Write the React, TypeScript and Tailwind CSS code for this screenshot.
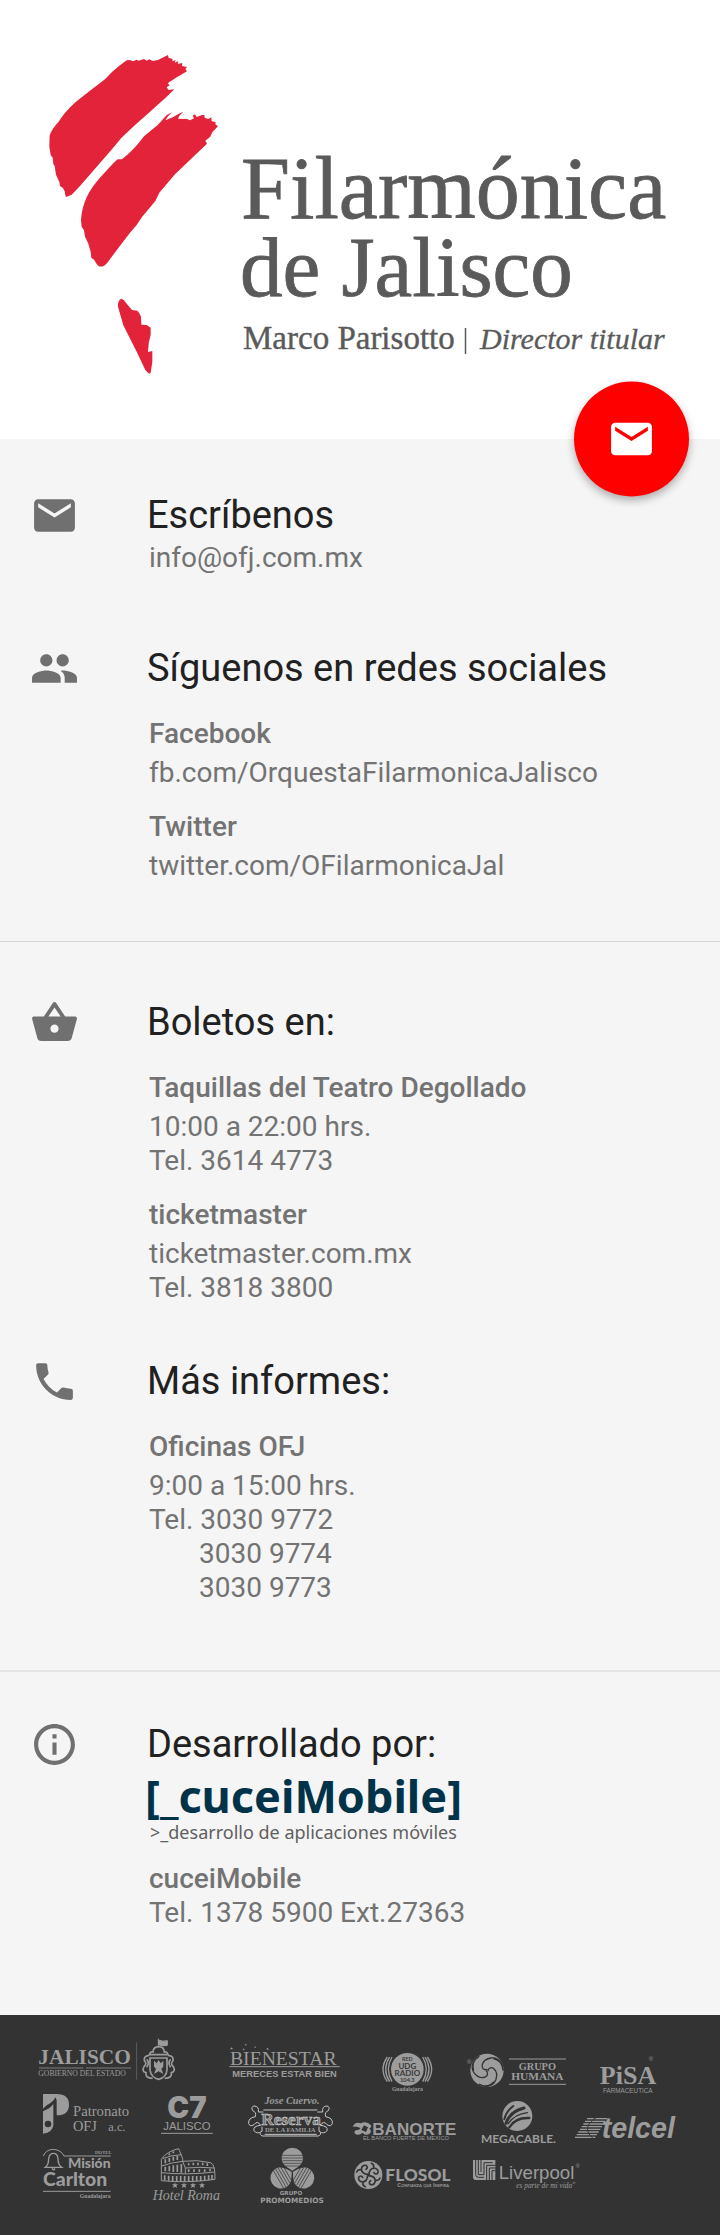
import type { ReactNode } from "react";
import { MdEmail, MdInfoOutline, MdPeople, MdPhone, MdShoppingBasket } from "react-icons/md";
import type { IconType } from "react-icons";

const SERIF = "'Liberation Serif', serif";
const SANS = "'Liberation Sans', sans-serif";
const LATO = "Lato, sans-serif";

function OrchestraLogo() {
  return (
    <svg viewBox="48 52 624 326" className="block h-auto w-full" role="img" aria-label="Filarmónica de Jalisco">
      <g transform="translate(30 40) scale(0.33333)" fill="#e32339">
        <path d="M108 471 Q104 463 105 456 L99 444 L90 438 L88 426 L78 404 L74 378 L70 372 L68 353 L62 345 L58 320 L59 286 Q66 266 86 245 Q104 215 138 185 Q180 152 225 118 Q246 94 267 78 L290 61 L300 60 L309 64 L320 59 L326 62 L342 57 L350 62 L358 58 L368 63 L384 60 L402 51 L414 45 L416 54 L427 56 L428 64 L437 60 L434 68 L445 63 L443 72 L457 69 L456 78 L471 81 L466 87 L471 94 L438 113 L413 130 L419 136 L410 142 L416 150 L433 148 L410 170 L350 224 Q310 258 273 295 Q246 329 210 369 L150 438 L125 464 Z" />
        <path d="M205 678 Q198 671 193 660 L184 653 L182 635 L174 608 L165 590 L162 571 L155 560 L153 540 Q155 505 170 472 Q184 440 220 402 L250 370 L263 358 L276 358 Q312 330 342 289 L383 255 L397 240 L410 225 L427 217 L414 229 L406 241 L430 231 L445 222 L460 215 L448 227 L444 236 L460 237 L469 236 L480 241 L492 235 L488 227 L495 223 L500 231 L516 225 L523 225 L524 233 L535 237 L544 232 L545 244 L557 246 L556 253 L564 259 L548 275 L540 291 L526 302 L531 311 L490 350 L435 403 L388 458 L376 483 L336 531 L320 555 L300 578 L265 624 L232 668 Q218 684 205 678 Z" />
        <path d="M264 800 Q263 779 275 776 Q283 779 289 790 L306 810 L322 812 Q329 818 333 830 L334 854 L350 855 L362 863 L362 884 Q354 910 354 936 L367 933 L367 965 L362 998 L357 1001 L346 990 L320 935 L280 856 Z" />
      </g>
      <g fill="#5a5a5a" stroke="#5a5a5a" strokeWidth="0.8" fontFamily={SERIF}>
        <text x="241" y="218" fontSize="88">Filarmónica</text>
        <text x="240" y="296" fontSize="85">de Jalisco</text>
        <text x="243" y="349" fontSize="33" strokeWidth="0.4">Marco Parisotto</text>
        <path d="M465.500 328V354" strokeWidth="1.500" />
        <text x="480" y="349" fontSize="30" fontStyle="italic" strokeWidth="0.3">Director titular</text>
      </g>
    </svg>
  );
}

function Section({ icon: Icon, title, children }: { icon: IconType; title: string; children: ReactNode }) {
  return (
    <section className="pl-[30px]">
      <div className="flex h-11 items-center gap-[68px]">
        <Icon className="size-[49px] shrink-0 text-[#707070]" />
        <h2 className="text-[38px] leading-[44px] text-[#212121]">{title}</h2>
      </div>
      <div className="pl-[119px]">{children}</div>
    </section>
  );
}

function Entry({ label, children }: { label: string; children: ReactNode }) {
  return (
    <div>
      <h3 className="mb-[5px] font-medium">{label}</h3>
      {children}
    </div>
  );
}

function Logo({ name, box, width, children }: { name: string; box: string; width: string; children: ReactNode }) {
  return (
    <svg viewBox={box} className={`${width} block h-full min-w-0 overflow-visible`} fill="#9c9c9c" role="img" aria-label={name}>
      {children}
    </svg>
  );
}

const stroke = { fill: "none", stroke: "#9c9c9c" };

function Sponsors() {
  return (
    <footer className="bg-[#333333] px-9 pt-[19px] pb-[29px]">
      <div className="flex h-[60px] justify-center">
        <Logo name="Jalisco" box="108 72 498 180" width="w-[166px]">
          <text x="115" y="161" fontSize="64" fontWeight="700" fontFamily={SERIF}>JALISCO</text>
          <path d="M117 174H250M258 174H393" {...stroke} strokeWidth="3" opacity="0.7" />
          <text x="115" y="199" fontSize="23" fontFamily={SERIF}>GOBIERNO DEL ESTADO</text>
          <path d="M410 97V209" {...stroke} strokeWidth="2" opacity="0.6" />
          <path d="M475 86V112M475 90Q488 96 502 92V106Q488 110 476 104Z" stroke="#9c9c9c" strokeWidth="3" />
          <path d="M459 126Q460 110 476 110Q492 110 493 126Q502 124 504 134H448Q450 124 459 126ZM450 144H501V180Q499 202 476 208Q453 202 450 180Z" {...stroke} strokeWidth="5" />
          <path d="M448 136Q428 138 434 154Q442 160 432 170Q424 184 438 188Q434 204 458 205M504 136Q524 138 518 154Q510 160 520 170Q528 184 514 188Q518 204 494 205M440 148Q450 158 440 172M512 148Q502 158 512 172" {...stroke} strokeWidth="5" />
          <path d="M462 152L470 160L476 150L482 160L490 152V170L484 176L490 192L476 184L462 192L468 176L462 170Z" />
        </Logo>
        <Logo name="Bienestar" box="606 72 474 180" width="w-[158px]">
          <text x="690" y="166" fontSize="59" fontFamily={SERIF}>BIENESTAR</text>
          <path d="M688 170H1019" {...stroke} strokeWidth="3" />
          <path d="M690 118l5-6 4 6zM734 106l3-5 4 5zM728 120l3-5 3 5zM762 112l4-3 2 5zM798 118l5-5 4 6z" />
          <text x="697" y="201" fontSize="28" fontWeight="700" fontFamily={SANS}>MERECES ESTAR BIEN</text>
        </Logo>
        <Logo name="Red UDG Radio" box="1080 72 270 180" width="w-[90px]">
          <circle cx="1222" cy="178" r="49" />
          <path d="M1176 141Q1154 178 1176 215M1169 141Q1145 178 1169 215M1162 141Q1136 178 1162 215M1268 141Q1290 178 1268 215M1275 141Q1299 178 1275 215M1282 141Q1308 178 1282 215" {...stroke} strokeWidth="4" />
          <g fill="#3a3a3a" textAnchor="middle" fontFamily={LATO} fontWeight="700">
            <text x="1222" y="153" fontSize="16">RED</text>
            <text x="1222" y="176" fontSize="24">UDG</text>
            <text x="1222" y="198" fontSize="24">RADIO</text>
            <text x="1222" y="217" fontSize="17">104.3</text>
          </g>
          <text x="1222" y="243" fontSize="17" textAnchor="middle" fontWeight="700" fontFamily={SERIF}>Guadalajara</text>
        </Logo>
        <Logo name="Grupo Humana" box="1350 72 402 180" width="w-[134px]">
          <text x="1401" y="163" fontSize="18" fontFamily={SANS}>®</text>
          <circle cx="1461" cy="181" r="50" />
          <g fill="none" stroke="#333333" strokeLinecap="round">
            {[0, 120, 240].map((angle) => (
              <g key={angle} transform={`rotate(${angle} 1461 181)`}>
                <path d="M1461 178C1440 184 1440 150 1472 144C1486 142 1496 148 1502 158" strokeWidth="4" />
                <path d="M1436 140C1420 150 1416 166 1420 180" strokeWidth="5" />
              </g>
            ))}
          </g>
          <path d="M1527 147H1698M1527 223H1698" {...stroke} strokeWidth="3" />
          <text x="1612" y="180" fontSize="31" textAnchor="middle" fontWeight="700" fontFamily={SERIF}>GRUPO</text>
          <text x="1612" y="211" fontSize="34" textAnchor="middle" fontWeight="700" fontFamily={SERIF}>HUMANA</text>
        </Logo>
        <Logo name="PiSA Farmacéutica" box="1752 72 300 180" width="w-[100px]">
          <text x="1884" y="223" fontSize="78" textAnchor="middle" fontWeight="700" fontFamily={SERIF}>PiSA</text>
          <text x="1946" y="152" fontSize="18" fontFamily={SANS}>®</text>
          <text x="1809" y="248" fontSize="19" fontFamily={SANS}>FARMACEUTICA</text>
        </Logo>
      </div>
      <div className="flex h-[52px] justify-center">
        <Logo name="Patronato OFJ" box="108 252 327 156" width="w-[109px]">
          <path d="M129 252H170Q207 252 207 284Q207 316 170 316V280Q172 270 166 262Q160 276 140 286L129 296Z" />
          <path d="M129 304Q150 296 160 282V345Q158 368 129 371Z" />
          <circle cx="144" cy="342" r="10" fill="#333333" />
          <g fontFamily={SERIF}>
            <text x="219" y="319" fontSize="44">Patronato</text>
            <text x="219" y="362" fontSize="43">OFJ</text>
            <text x="325" y="362" fontSize="37">a.c.</text>
          </g>
        </Logo>
        <Logo name="C7 Jalisco" box="435 252 255 156" width="w-[85px]">
          <text x="561" y="325" fontSize="88" textAnchor="middle" fontWeight="900" fontFamily="Inter, sans-serif">C7</text>
          <text x="490" y="360" fontSize="34" fontFamily={SANS}>JALISCO</text>
          <path d="M483 370H638" {...stroke} strokeWidth="3" />
        </Logo>
        <Logo name="José Cuervo Reserva de la Familia" box="690 252 339 156" width="w-[113px]">
          <text x="876" y="281" fontSize="31" textAnchor="middle" fontWeight="700" fontStyle="italic" fontFamily={SERIF}>Jose Cuervo.</text>
          <text x="873" y="344" fontSize="52" textAnchor="middle" fontWeight="700" fontFamily={SERIF} fill="#777777" stroke="#dddddd" strokeWidth="1.500">Reserva</text>
          <text x="871" y="367" fontSize="20" textAnchor="middle" fontWeight="700" fontFamily={SERIF}>DE LA FAMILIA</text>
          <path d="M790 300H952M790 306H775Q778 288 762 288Q752 290 758 302Q770 306 766 320Q744 324 746 340Q750 352 762 344Q772 330 782 346Q758 348 762 362Q770 374 786 364V350M952 306H968Q965 288 981 288Q991 290 985 302Q973 306 977 320Q999 324 997 340Q993 352 981 344Q971 330 961 346Q985 348 981 362Q973 374 957 364V350M780 368Q780 380 796 378H948Q962 380 962 368M794 373H950" fill="none" stroke="#c8c8c8" strokeWidth="3" />
        </Logo>
        <Logo name="Banorte" box="1029 252 381 156" width="w-[127px]">
          <path d="M1058 350Q1066 334 1082 340Q1100 332 1113 346Q1116 352 1108 356Q1116 362 1110 370Q1098 380 1088 368Q1076 378 1066 372Q1060 366 1068 360Q1078 362 1082 354Q1070 348 1058 350ZM1092 346L1084 360L1098 366L1104 352Z" fillRule="evenodd" />
          <text x="1117" y="375" fontSize="51" fontWeight="700" fontFamily={SANS}>BANORTE</text>
          <text x="1218" y="391" fontSize="17" textAnchor="middle" fontFamily={SANS}>EL BANCO FUERTE DE MEXICO</text>
        </Logo>
        <Logo name="Megacable" box="1410 252 288 156" width="w-[96px]">
          <circle cx="1552" cy="318" r="45" />
          <g fill="none" stroke="#333333" strokeWidth="6" strokeLinecap="round">
            <path d="M1513 328Q1518 304 1540 288" />
            <path d="M1518 340Q1530 304 1572 294" strokeWidth="9" />
            <path d="M1528 352Q1546 322 1588 324" strokeWidth="7" />
            <path d="M1524 342Q1544 312 1582 308" strokeWidth="4" />
          </g>
          <text x="1443" y="398" fontSize="36" fontWeight="700" fontFamily={LATO}>MEGACABLE.</text>
        </Logo>
        <Logo name="Telcel" box="1698 252 354 156" width="w-[118px]">
          <path d="M1761 326H1822M1755 334H1816M1750 342H1811M1745 350H1806M1740 358H1801M1735 366H1796M1730 374H1791M1725 382H1786" {...stroke} strokeWidth="4" />
          <path d="M1792 320Q1740 352 1780 386" fill="none" stroke="#333333" strokeWidth="3" />
          <text x="1805" y="384" fontSize="86" fontWeight="700" fontStyle="italic" fontFamily={SANS}>telcel</text>
        </Logo>
      </div>
      <div className="flex h-[60px] justify-center">
        <Logo name="Hotel Misión Carlton" box="108 408 288 180" width="w-[96px]">
          <path d="M130 438Q138 418 160 418Q184 420 192 438H332" {...stroke} strokeWidth="3" />
          <path d="M136 472Q146 464 146 446Q148 430 160 430Q173 430 174 446Q174 464 185 472ZM156 475Q160 484 165 475" {...stroke} strokeWidth="4" />
          <text x="285" y="432" fontSize="14" fontWeight="700" fontFamily={SERIF}>HOTEL</text>
          <text x="332" y="474" fontSize="42" fontWeight="900" fontFamily={LATO} textAnchor="end">Misión</text>
          <text x="129" y="528" fontSize="58" fontWeight="900" fontFamily={LATO}>Carlton</text>
          <path d="M129 544H332" {...stroke} strokeWidth="3" />
          <text x="332" y="563" fontSize="17" textAnchor="end" fontWeight="700" fontFamily={SERIF}>Guadalajara</text>
        </Logo>
        <Logo name="Hotel Roma" box="396 408 312 180" width="w-[104px]">
          <path d="M484 512V448Q500 424 536 416L548 446V454Q590 448 632 458Q646 464 645 508Q560 520 484 512ZM484 488Q560 496 645 486M486 468Q510 458 548 454M488 446Q510 436 544 434M556 474Q600 470 644 474M548 454L556 474V490" {...stroke} strokeWidth="3" />
          <path d="M494 511V496M506 512V497M518 513V498M530 514V498M542 514V498M554 514V498M566 514V498M578 514V498M590 513V498M602 513V498M614 512V497M626 511V496M636 510V495M496 484V470M508 484V468M520 486V466M532 486V464M544 488V462M496 460V448M508 456V444M520 452V440M532 450V438M508 436V430M520 430V424M566 466V460M580 466V458M594 466V458M608 466V458M622 468V460M566 486V478M582 486V478M598 486V478M614 486V478M630 484V476" {...stroke} strokeWidth="5" />
          <path d="M525 517l2 6h7l-5 4 2 7-6-4-6 4 2-7-5-4h7zM552 517l2 6h7l-5 4 2 7-6-4-6 4 2-7-5-4h7zM579 517l2 6h7l-5 4 2 7-6-4-6 4 2-7-5-4h7zM606 517l2 6h7l-5 4 2 7-6-4-6 4 2-7-5-4h7z" />
          <text x="458" y="570" fontSize="42" fontStyle="italic" fontFamily={SERIF}>Hotel Roma</text>
        </Logo>
        <Logo name="Grupo Promomedios" box="708 408 312 180" width="w-[104px]">
          {[0, 120, 240].map((angle) => (
            <g key={angle} transform={`rotate(${angle} 877 484)`}>
              <path d="M877 482C866 474 845 466 845 444A32 31 0 0 1 909 444C909 466 888 474 877 482Z" />
              <path d="M845 436H909M845 444H909M847 452H907M850 460H904M856 468H898" fill="none" stroke="#333333" strokeWidth="2" />
            </g>
          ))}
          <g textAnchor="middle" fontWeight="700" fontFamily="'DejaVu Sans', sans-serif">
            <text x="873" y="556" fontSize="17">GRUPO</text>
            <text x="876" y="579" fontSize="22">PROMOMEDIOS</text>
          </g>
        </Logo>
        <Logo name="Flosol" box="1020 408 366 180" width="w-[122px]">
          <circle cx="1105" cy="495" r="42" />
          <g fill="none" stroke="#333333" strokeWidth="5" strokeLinecap="round">
            {[0, 90, 180, 270].map((angle) => (
              <path key={angle} transform={`rotate(${angle} 1105 495)`} d="M1104 493Q1086 492 1084 478Q1086 464 1098 466Q1106 472 1098 478M1085 480Q1074 476 1070 486" />
            ))}
          </g>
          <text x="1156" y="513" fontSize="52" fontWeight="900" fontFamily={LATO}>FLOSOL</text>
          <text x="1347" y="531" fontSize="17" textAnchor="end" fontWeight="700" fontFamily={LATO} fontVariant="small-caps">Confianza que Inspira</text>
        </Logo>
        <Logo name="Liverpool" box="1386 408 666 180" width="w-[222px]">
          <path d="M1419 450H1486V510H1428Q1419 510 1419 500Z" />
          <path d="M1427 450V494Q1427 502 1436 502H1452M1435 450V494H1452V458H1478M1443 450V486M1460 510V466H1486M1468 510V474H1486M1476 510V482H1486" fill="none" stroke="#333333" strokeWidth="3" />
          <text x="1496" y="508" fontSize="56" fontFamily={SANS}>Liverpool</text>
          <text x="1727" y="473" fontSize="16" fontFamily={SANS}>®</text>
          <text x="1549" y="535" fontSize="22" fontStyle="italic" fontFamily={SERIF}>es parte de mi vida"</text>
        </Logo>
      </div>
    </footer>
  );
}

export default function App() {
  return (
    <div className="bg-[#f5f5f5] font-[Roboto,sans-serif] text-[28px] leading-[34px] text-[#737373]">
      <header className="relative bg-white px-12 pt-[52px] pb-[61px]">
        <OrchestraLogo />
        <button
          type="button"
          aria-label="Enviar correo"
          className="absolute right-[31px] bottom-0 flex size-[115px] translate-y-1/2 items-center justify-center rounded-full bg-[#ff0000] text-white shadow-[0_4px_8px_rgba(0,0,0,0.3)]"
        >
          <MdEmail className="size-[49px]" />
        </button>
      </header>

      <main>
        <div className="border-b border-[#d5d5d5] pt-[54px] pb-[58px]">
          <Section icon={MdEmail} title="Escríbenos">
            <a href="mailto:info@ofj.com.mx" className="mt-1 block">info@ofj.com.mx</a>
          </Section>
          <div className="mt-[71px]">
            <Section icon={MdPeople} title="Síguenos en redes sociales">
              <div className="mt-[27px] flex flex-col gap-5">
                <Entry label="Facebook">
                  <a href="https://fb.com/OrquestaFilarmonicaJalisco" className="block">fb.com/OrquestaFilarmonicaJalisco</a>
                </Entry>
                <Entry label="Twitter">
                  <a href="https://twitter.com/OFilarmonicaJal" className="block">twitter.com/OFilarmonicaJal</a>
                </Entry>
              </div>
            </Section>
          </div>
        </div>

        <div className="border-b-2 border-[#e4e4e4] pt-[58px] pb-[65px]">
          <Section icon={MdShoppingBasket} title="Boletos en:">
            <div className="mt-[27px] flex flex-col gap-5">
              <Entry label="Taquillas del Teatro Degollado">
                <p>10:00 a 22:00 hrs.</p>
                <p>Tel. 3614 4773</p>
              </Entry>
              <Entry label="ticketmaster">
                <a href="https://ticketmaster.com.mx" className="block">ticketmaster.com.mx</a>
                <p>Tel. 3818 3800</p>
              </Entry>
            </div>
          </Section>
          <div className="mt-[54px]">
            <Section icon={MdPhone} title="Más informes:">
              <div className="mt-[27px]">
                <Entry label="Oficinas OFJ">
                  <p>9:00 a 15:00 hrs.</p>
                  <p>Tel. 3030 9772</p>
                  <p className="pl-[50px]">3030 9774</p>
                  <p className="pl-[50px]">3030 9773</p>
                </Entry>
              </div>
            </Section>
          </div>
        </div>

        <div className="pt-[50px] pb-[85px]">
          <Section icon={MdInfoOutline} title="Desarrollado por:">
            <div className="-ml-1 pt-1 font-['Noto_Sans',sans-serif]">
              <p className="text-[45px] leading-[52px] font-bold text-[#003349]">[_cuceiMobile]</p>
              <p className="mt-0.5 pl-[5px] text-[18px] leading-4 text-[#606060]">&gt;_desarrollo de aplicaciones móviles</p>
            </div>
            <h3 className="mt-[22px] font-medium">cuceiMobile</h3>
            <p>Tel. 1378 5900 Ext.27363</p>
          </Section>
        </div>
      </main>

      <Sponsors />
    </div>
  );
}
